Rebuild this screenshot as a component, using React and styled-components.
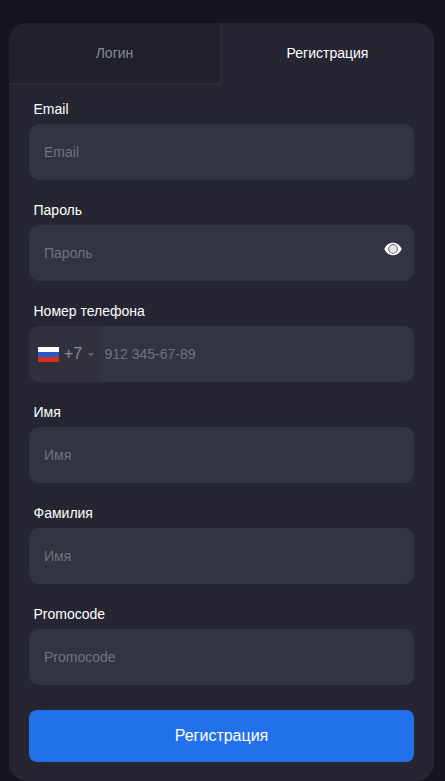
import React from "react";
import styled, { createGlobalStyle } from "styled-components";

const Global = createGlobalStyle`
  html, body { margin: 0; padding: 0; background: #14151d; overflow: hidden; }
  * { box-sizing: border-box; }
`;

const Page = styled.div`
  width: 445px;
  height: 781px;
  padding: 23px 11px 0 9px;
  font-family: "Liberation Sans", Arial, sans-serif;
`;

const Card = styled.div`
  height: 758px;
  background: #252632;
  border-radius: 18px;
  overflow: hidden;
`;

const Tabs = styled.div`
  display: grid;
  grid-template-columns: 212px 213px;
  height: 61px;
`;

const Tab = styled.div`
  display: flex;
  align-items: center;
  justify-content: center;
  font-size: 14px;
  padding-bottom: 1px;
  color: ${(p) => (p.$active ? "#ffffff" : "#8a8b92")};
  background: ${(p) => (p.$active ? "transparent" : "#20212b")};
  border-right: ${(p) => (p.$active ? "none" : "1px solid #2f303c")};
  border-bottom: ${(p) => (p.$active ? "none" : "1px solid #2f303c")};
`;

const Form = styled.form`
  display: flex;
  flex-direction: column;
  padding: 0 20px;
`;

const Field = styled.div`
  display: flex;
  flex-direction: column;
  height: 101px;
  padding-top: 17px;
`;

const Label = styled.label`
  height: 23px;
  padding-left: 4.5px;
  font-size: 14px;
  line-height: 16px;
  color: #ffffff;
`;

const InputBox = styled.div`
  position: relative;
  display: flex;
  align-items: center;
  height: 56px;
  border-radius: 10px;
  background: #333441;
  overflow: hidden;
`;

const Input = styled.input`
  flex: 1;
  min-width: 0;
  height: 100%;
  padding: ${(p) => (p.$phone ? "0 0 0 4.5px" : "0 15px")};
  border: 0;
  outline: 0;
  background: transparent;
  color: #fff;
  font: 14px "Liberation Sans", Arial, sans-serif;
  &::placeholder { color: #71727b; opacity: 1; }
`;

const EyeButton = styled.span`
  position: absolute;
  right: 12px;
  top: 17px;
  display: flex;
  line-height: 0;
`;

const Country = styled.div`
  display: flex;
  align-items: center;
  width: 71px;
  height: 100%;
  padding-left: 9px;
  background: #30313d;
  color: #8a8b93;
  font-size: 16px;
`;

const Dial = styled.span`
  margin-left: 5px;
`;

const Caret = styled.span`
  width: 0;
  height: 0;
  margin-left: 6px;
  margin-top: 1px;
  border-left: 3px solid transparent;
  border-right: 3px solid transparent;
  border-top: 4px solid #5b5c65;
`;

const Submit = styled.button`
  height: 52px;
  margin-top: 20px;
  border: 0;
  border-radius: 8px;
  background: #2271eb;
  color: #fff;
  font: 16px "Liberation Sans", Arial, sans-serif;
`;

const Flag = () => (
  <svg width="21" height="15" viewBox="0 0 21 15" aria-hidden="true">
    <rect width="21" height="5" fill="#ffffff" />
    <rect y="5" width="21" height="5" fill="#2a58c4" />
    <rect y="10" width="21" height="5" fill="#d92c1c" />
  </svg>
);

const Eye = () => (
  <svg width="18" height="14" viewBox="0 0 18 14" aria-hidden="true">
    <path
      fill="#ffffff"
      fillRule="evenodd"
      d="M9 .8C5 .8 1.8 3.4.3 7c1.5 3.6 4.7 6.2 8.7 6.2s7.2-2.6 8.7-6.2C16.2 3.4 13 .8 9 .8Zm0 1.5a4.7 4.7 0 1 1 0 9.4 4.7 4.7 0 0 1 0-9.4Z"
    />
    <circle cx="9" cy="7" r="3.9" fill="#ffffff" opacity="0.88" />
  </svg>
);

const fields = [
  { label: "Email", placeholder: "Email" },
  { label: "Пароль", placeholder: "Пароль", eye: true, type: "password" },
  { label: "Номер телефона", placeholder: "912 345-67-89", phone: true },
  { label: "Имя", placeholder: "Имя" },
  { label: "Фамилия", placeholder: "Имя" },
  { label: "Promocode", placeholder: "Promocode" },
];

export default function App() {
  return (
    <>
      <Global />
      <Page>
        <Card>
          <Tabs>
            <Tab>Логин</Tab>
            <Tab $active>Регистрация</Tab>
          </Tabs>
          <Form onSubmit={(e) => e.preventDefault()}>
            {fields.map((f) => (
              <Field key={f.label}>
                <Label>{f.label}</Label>
                <InputBox>
                  {f.phone && (
                    <Country>
                      <Flag />
                      <Dial>+7</Dial>
                      <Caret />
                    </Country>
                  )}
                  <Input $phone={f.phone} type={f.type || "text"} placeholder={f.placeholder} />
                  {f.eye && (
                    <EyeButton>
                      <Eye />
                    </EyeButton>
                  )}
                </InputBox>
              </Field>
            ))}
            <Submit type="submit">Регистрация</Submit>
          </Form>
        </Card>
      </Page>
    </>
  );
}
